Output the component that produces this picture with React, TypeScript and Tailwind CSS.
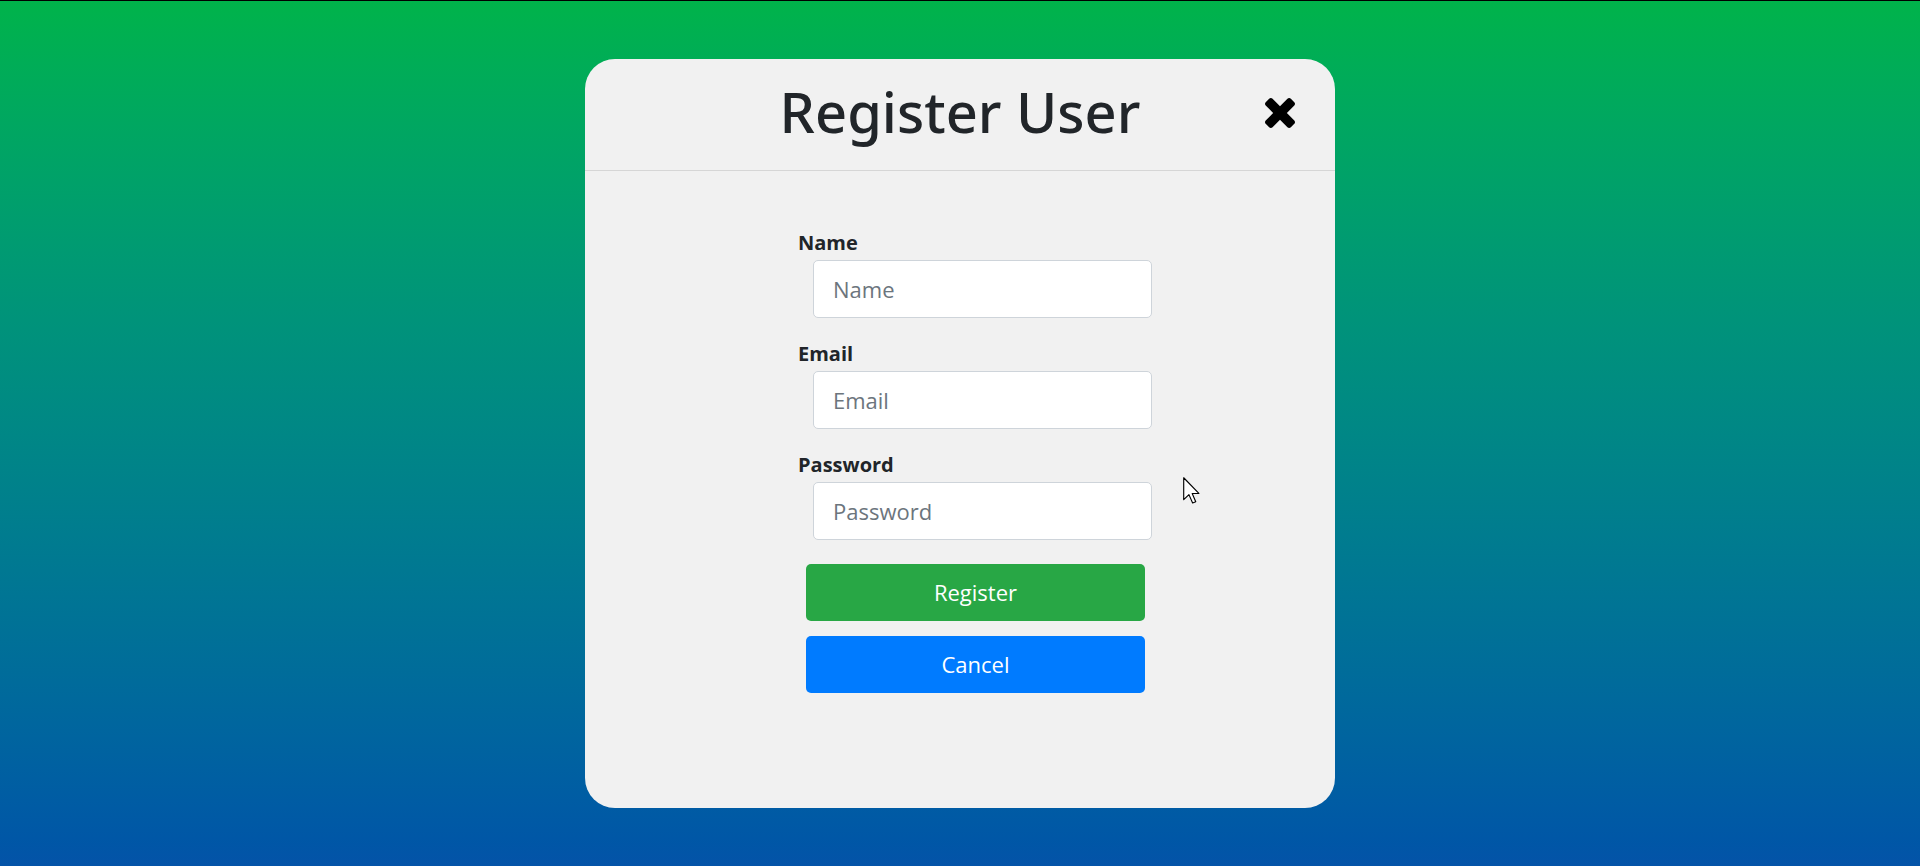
import React from 'react';

// FA4-style heavy "times" glyph used for the close button
const CloseIcon = () => (
  <svg width="30" height="30" viewBox="110 366 1188 1188" fill="#000">
    <path d="M1298 1322q0 40-28 68l-136 136q-28 28-68 28t-68-28l-294-294-294 294q-28 28-68 28t-68-28l-136-136q-28-28-28-68t28-68l294-294-294-294q-28-28-28-68t28-68l136-136q28-28 68-28t68 28l294 294 294-294q28-28 68-28t68 28l136 136q28 28 28 68t-28 68l-294 294 294 294q28 28 28 68z" />
  </svg>
);

// mouse pointer visible in the capture
const Pointer = () => (
  <svg width="17" height="27" viewBox="0 0 12 19" className="absolute left-[1183px] top-[476px] pointer-events-none">
    <path
      d="M0.5 0.5 L0.5 16 L4.2 12.4 L6.8 18.3 L9 17.4 L6.5 11.6 L11.2 11.6 Z"
      fill="#fff"
      stroke="#000"
      strokeWidth="0.8"
      strokeLinejoin="round"
    />
  </svg>
);

const Field = ({ label, type = 'text' }: { label: string; type?: string }) => (
  <div className="flex flex-col mb-[22px]">
    <label className="text-[20px] leading-[27px] font-bold text-[#212529]">{label}</label>
    <input
      type={type}
      placeholder={label}
      className="mt-[4px] ml-[15px] w-[339px] h-[58px] px-[19px] bg-white border border-[#ced4da] rounded-[5px] text-[22px] text-[#495057] placeholder:text-[#6c757d] outline-none"
    />
  </div>
);

export default function App() {
  return (
    <div
      className="relative w-full h-[866px] border-t border-black bg-gradient-to-b from-[#00b34a] to-[#0453a8] flex justify-center pt-[58px]"
      style={{ fontFamily: '"Open Sans", "Noto Sans", sans-serif' }}
    >
      <div className="w-[750px] h-[749px] bg-[#f1f1f1] rounded-[30px] flex flex-col">
        <div className="relative h-[112px] pb-[8px] shrink-0 border-b border-[#d6d6d6] flex items-center justify-center">
          <h1 className="text-[56px] text-[#212529] font-medium" style={{ fontFamily: '"Noto Sans", "Open Sans", sans-serif' }}>
            Register User
          </h1>
          <button className="absolute left-[680px] top-[39px]">
            <CloseIcon />
          </button>
        </div>
        <div className="pl-[213px] pt-[58px]">
          <form className="w-[354px] flex flex-col" onSubmit={(e) => e.preventDefault()}>
            <Field label="Name" />
            <Field label="Email" type="email" />
            <Field label="Password" type="password" />
            <button
              type="submit"
              className="ml-[8px] mt-[2px] w-[339px] h-[57px] rounded-[5px] bg-[#28a745] text-white text-[22px]"
            >
              Register
            </button>
            <button
              type="button"
              className="ml-[8px] mt-[15px] w-[339px] h-[57px] rounded-[5px] bg-[#007bff] text-white text-[22px]"
            >
              Cancel
            </button>
          </form>
        </div>
      </div>
      <Pointer />
    </div>
  );
}
